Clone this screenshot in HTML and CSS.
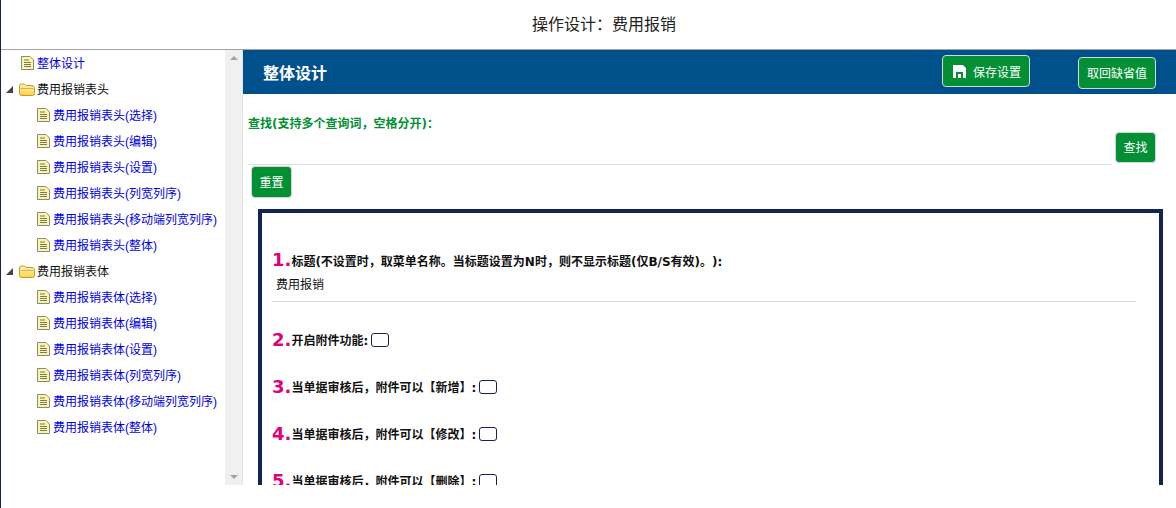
FILE: index.html
```html
<!DOCTYPE html>
<html lang="zh-CN">
<head>
<meta charset="utf-8">
<title>操作设计</title>
<link rel="stylesheet" href="styles.css">
</head>
<body>
<svg class="defs" width="0" height="0" aria-hidden="true">
  <defs>
    <linearGradient id="gloss" x1="0" y1="0" x2="0" y2="1">
      <stop offset="0" stop-color="#fff3b0"/>
      <stop offset="1" stop-color="#fbd24e"/>
    </linearGradient>
  </defs>
  <symbol id="doc" viewBox="0 0 13 14">
    <path d="M.5.5H9L12.5 4V13.5H.5Z" fill="#fdf6a8" stroke="#8a8a78"/>
    <path d="M3 4H8M3 6.5H10M3 8.5H10M3 10.5H10" stroke="#77776a" fill="none"/>
  </symbol>
  <symbol id="folder" viewBox="0 0 16 13">
    <path d="M.5 10.500V3Q.5 1 2.500 1H5.500L7 2.500H13Q15 2.500 15.500 4.500V10.500Q15.500 12.500 13.500 12.500H2.500Q.5 12.500 .5 10.500Z" fill="url(#gloss)" stroke="#c79a2e"/>
    <path d="M1.500 5.500H14.500" fill="none" stroke="#e0b443"/>
  </symbol>
</svg>
<header class="page-title">操作设计：费用报销</header>
<main class="layout">
  <nav class="sidebar">
    <ul class="tree">
      <li class="row leaf-top"><svg class="ico-doc"><use href="#doc"/></svg><a>整体设计</a></li>
      <li class="row group"><i class="tri"></i><svg class="ico-folder"><use href="#folder"/></svg><span>费用报销表头</span></li>
      <li class="row leaf"><svg class="ico-doc"><use href="#doc"/></svg><a>费用报销表头(选择)</a></li>
      <li class="row leaf"><svg class="ico-doc"><use href="#doc"/></svg><a>费用报销表头(编辑)</a></li>
      <li class="row leaf"><svg class="ico-doc"><use href="#doc"/></svg><a>费用报销表头(设置)</a></li>
      <li class="row leaf"><svg class="ico-doc"><use href="#doc"/></svg><a>费用报销表头(列宽列序)</a></li>
      <li class="row leaf"><svg class="ico-doc"><use href="#doc"/></svg><a>费用报销表头(移动端列宽列序)</a></li>
      <li class="row leaf"><svg class="ico-doc"><use href="#doc"/></svg><a>费用报销表头(整体)</a></li>
      <li class="row group"><i class="tri"></i><svg class="ico-folder"><use href="#folder"/></svg><span>费用报销表体</span></li>
      <li class="row leaf"><svg class="ico-doc"><use href="#doc"/></svg><a>费用报销表体(选择)</a></li>
      <li class="row leaf"><svg class="ico-doc"><use href="#doc"/></svg><a>费用报销表体(编辑)</a></li>
      <li class="row leaf"><svg class="ico-doc"><use href="#doc"/></svg><a>费用报销表体(设置)</a></li>
      <li class="row leaf"><svg class="ico-doc"><use href="#doc"/></svg><a>费用报销表体(列宽列序)</a></li>
      <li class="row leaf"><svg class="ico-doc"><use href="#doc"/></svg><a>费用报销表体(移动端列宽列序)</a></li>
      <li class="row leaf"><svg class="ico-doc"><use href="#doc"/></svg><a>费用报销表体(整体)</a></li>
    </ul>
    <div class="scrollbar"><i class="arrow-up"></i><i class="arrow-down"></i></div>
  </nav>
  <section class="content">
    <div class="banner">
      <h1>整体设计</h1>
      <button class="btn btn-save"><svg class="ico-save" viewBox="0 0 13 13"><path d="M0 0H10L13 3V13H0ZM3 7V13H5V9H8V13H10V7Z" fill="#fff" fill-rule="evenodd"/></svg>保存设置</button>
      <button class="btn btn-default">取回缺省值</button>
    </div>
    <div class="search">
      <label class="search-label">查找(支持多个查询词，空格分开)：</label>
      <div class="search-line"><div class="search-input"></div><button class="btn btn-find">查找</button></div>
      <button class="btn btn-reset">重置</button>
    </div>
    <div class="panel">
      <div class="item item-first">
        <span class="num">1.</span><b>标题(不设置时，取菜单名称。当标题设置为N时，则不显示标题(仅B/S有效)。):</b>
        <div class="value">费用报销</div>
      </div>
      <div class="item"><span class="num">2.</span><b>开启附件功能:</b><i class="check"></i></div>
      <div class="item"><span class="num">3.</span><b>当单据审核后，附件可以【新增】:</b><i class="check"></i></div>
      <div class="item"><span class="num">4.</span><b>当单据审核后，附件可以【修改】:</b><i class="check"></i></div>
      <div class="item"><span class="num">5.</span><b>当单据审核后，附件可以【删除】:</b><i class="check"></i></div>
    </div>
  </section>
</main>
</body>
</html>
```
FILE: styles.css
```css
* { box-sizing: border-box; }
html, body { margin: 0; height: 508px; overflow: hidden; background: #fff; }
body {
  font-family: "Liberation Sans", "Noto Sans CJK SC", sans-serif;
  font-size: 12px;
  color: #111;
  border-left: 1px solid #132454;
  text-spacing-trim: space-all;
}
.defs { position: absolute; }
.page-title {
  height: 50px;
  border-bottom: 1px solid #a3a3a3;
  padding-left: 31px;
  font-size: 16px;
  line-height: 49px;
  text-align: center;
  color: #222;
}
.layout {
  display: flex;
  height: 435px;
  overflow: hidden;
}
.sidebar {
  flex: 0 0 242px;
  display: flex;
}
.tree {
  flex: 1;
  list-style: none;
  margin: 0;
  padding: 0;
}
.row {
  height: 26px;
  display: flex;
  align-items: center;
  white-space: nowrap;
  padding-bottom: 2px;
}
.row a { color: #0000e6; }
.leaf-top { padding-left: 20px; }
.group { padding-left: 5px; }
.leaf { padding-left: 36px; }
.ico-doc { width: 13px; height: 14px; margin: 2px 3px 0 0; flex: none; }
.ico-folder { width: 16px; height: 13px; margin: 2px 2px 0 0; flex: none; }
.tri {
  width: 0;
  height: 0;
  margin: 2px 6px 0 0;
  border-style: solid;
  border-width: 0 0 7px 7px;
  border-color: transparent transparent #444 transparent;
}
.scrollbar {
  flex: 0 0 18px;
  background: #f0f0f0;
  border-right: 1px solid #e4e4e4;
  display: flex;
  flex-direction: column;
  justify-content: space-between;
  align-items: center;
  padding: 6px 0;
}
.arrow-up, .arrow-down {
  width: 0;
  height: 0;
  border-style: solid;
  border-width: 0 4px 4px;
  border-color: transparent transparent #a3a3a3;
}
.arrow-down { border-width: 4px 4px 0; border-color: #a3a3a3 transparent transparent; }
.content { flex: 1; min-width: 0; overflow: hidden; }
.banner {
  height: 44px;
  background: #00508c;
  display: flex;
  align-items: center;
  padding: 0 20px;
  color: #fff;
}
.banner h1 { flex: 1; margin: 0; font-size: 16px; font-weight: bold; }
.btn {
  font: inherit;
  color: #fff;
  background: #038f33;
  border: 1px solid #d6d6d6;
  border-radius: 4px;
  height: 32px;
  padding: 0 0 2px;
  white-space: nowrap;
}
.btn-save {
  display: flex;
  align-items: center;
  padding: 0 8px 0 10px;
  width: 88px;
  margin: -2px 48px 0 0;
}
.ico-save { width: 13px; height: 13px; margin-right: 7px; }
.btn-default { width: 78px; margin: 2px 0 0 0; }
.search { padding: 0 5px; }
.search-label {
  display: block;
  padding-top: 21px;
  height: 38px;
  line-height: 18px;
  color: #038f33;
  font-weight: bold;
  font-family: "DejaVu Sans", "Noto Sans CJK SC", sans-serif;
}
.search-line {
  display: flex;
  align-items: flex-start;
  gap: 3px;
  margin-right: 15px;
}
.search-input { flex: 1; height: 33px; border-bottom: 1px solid #dedede; }
.btn-find { width: 41px; height: 31px; }
.btn-reset { display: block; width: 41px; margin: 1px 0 0 3px; }
.panel {
  margin: 11px 13px 0 15px;
  border: 4px solid #132454;
  padding: 37px 23px 0 10px;
  height: 400px;
}
.item {
  height: 47px;
  font-weight: bold;
  display: flex;
  align-items: center;
  flex-wrap: wrap;
  color: #111;
  font-family: "DejaVu Sans", "Noto Sans CJK SC", sans-serif;
}
.item b { font-weight: bold; }
.item-first {
  display: block;
  height: 52px;
  border-bottom: 1px solid #dedede;
  margin-bottom: 14px;
}
.num {
  font-family: "DejaVu Sans", sans-serif;
  font-size: 18px;
  font-weight: bold;
  line-height: 20px;
  color: #e2007a;
}
.value {
  font-weight: normal;
  padding: 5px 0 0 4px;
  font-family: "Liberation Sans", "Noto Sans CJK SC", sans-serif;
}
.check {
  width: 18px;
  height: 14px;
  margin-left: 3px;
  border: 1px solid #132454;
  border-radius: 3px;
}
```
